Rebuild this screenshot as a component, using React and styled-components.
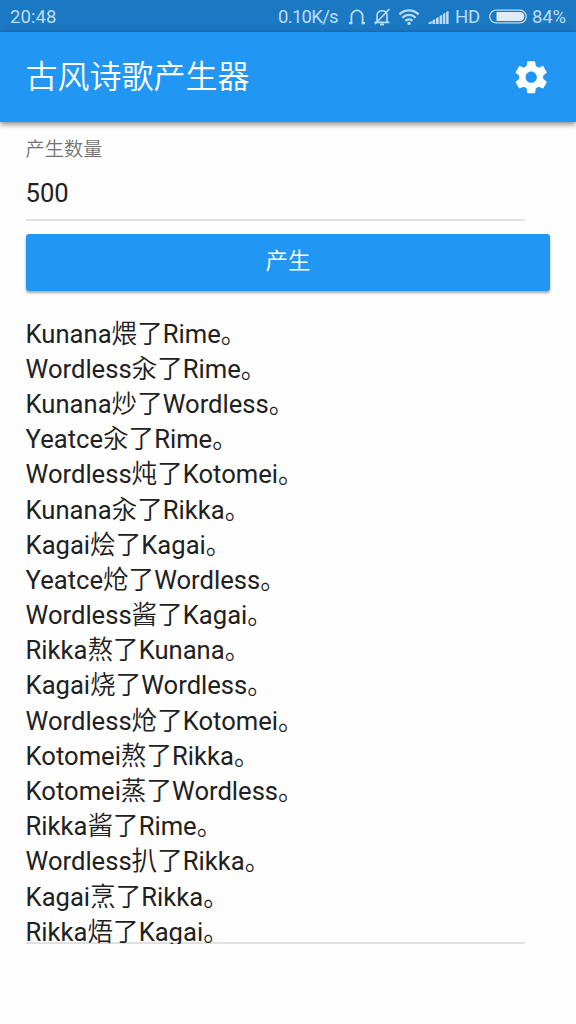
import React from 'react'
import styled, { createGlobalStyle } from 'styled-components'

const poems = [
    'Kunana煨了Rime。',
    'Wordless汆了Rime。',
    'Kunana炒了Wordless。',
    'Yeatce汆了Rime。',
    'Wordless炖了Kotomei。',
    'Kunana汆了Rikka。',
    'Kagai烩了Kagai。',
    'Yeatce炝了Wordless。',
    'Wordless酱了Kagai。',
    'Rikka熬了Kunana。',
    'Kagai烧了Wordless。',
    'Wordless炝了Kotomei。',
    'Kotomei熬了Rikka。',
    'Kotomei蒸了Wordless。',
    'Rikka酱了Rime。',
    'Wordless扒了Rikka。',
    'Kagai烹了Rikka。',
    'Rikka焐了Kagai。',
]

function HeadphoneIcon() {
    return (
        <svg width="18" height="18" viewBox="0 0 18 18" fill="none" stroke="currentColor" strokeWidth="1.8">
            <path d="M3.4 15.4V8a5.6 5.6 0 0 1 11.2 0v7.4" />
            <path d="M1 15.2h3.3M13.7 15.2H17" strokeWidth="2.2" />
        </svg>
    )
}

function MutedBellIcon() {
    return (
        <svg width="18" height="18" viewBox="0 0 18 18" fill="none" stroke="currentColor" strokeWidth="1.6">
            <path d="M1.6 14.4h14.8M4 14V7.4C4 4.6 6 2.8 9 2.8s5 1.8 5 4.6V14" />
            <path d="M16.4 1 2 16" />
            <path d="M7 16.4h4" strokeWidth="2" />
        </svg>
    )
}

function WifiIcon() {
    return (
        <svg width="22" height="18" viewBox="0 0 22 18" fill="none" stroke="currentColor" strokeWidth="2.3">
            <path d="M1.4 6.4a13.6 13.6 0 0 1 19.2 0" />
            <path d="M4.4 9.7a9.3 9.3 0 0 1 13.2 0" />
            <path d="M7.5 12.9a5 5 0 0 1 7 0" />
            <circle cx="11" cy="15.4" r="1.6" fill="currentColor" stroke="none" />
        </svg>
    )
}

function SignalIcon() {
    return (
        <svg width="21" height="16" viewBox="0 0 21 16" fill="currentColor">
            <path d="M.5 15v-1.2L3.6 12v3zM4.4 15v-3.6l2.8-1.5V15zM8 15V9.3l2.7-1.4V15zM11.6 15V7.1l2.5-1.3V15zM14.9 15V5l2.4-1.2V15zM18.1 15V3.1L20.6 2v13z" />
        </svg>
    )
}

function BatteryIcon() {
    return (
        <svg width="38" height="15" viewBox="0 0 38 15" fill="none">
            <rect x="0.8" y="1.1" width="36.4" height="12.8" rx="6.2" stroke="currentColor" strokeWidth="1.3" />
            <path d="M7.5 2.9h23.2a4.6 4.6 0 0 1 0 9.2H7.5z" fill="#e0edf8" />
        </svg>
    )
}

function SettingsIcon() {
    return (
        <svg width="38.4" height="38.4" viewBox="0 0 24 24" fill="currentColor">
            <path d="M19.43 12.98c.04-.32.07-.64.07-.98s-.03-.66-.07-.98l2.11-1.65c.19-.15.24-.42.12-.64l-2-3.46c-.12-.22-.39-.3-.61-.22l-2.49 1c-.52-.4-1.08-.73-1.69-.98l-.38-2.65C14.46 2.18 14.25 2 14 2h-4c-.25 0-.46.18-.49.42l-.38 2.65c-.61.25-1.17.59-1.69.98l-2.49-1c-.23-.09-.49 0-.61.22l-2 3.46c-.13.22-.07.49.12.64l2.11 1.65c-.04.32-.07.65-.07.98s.03.66.07.98l-2.11 1.65c-.19.15-.24.42-.12.64l2 3.46c.12.22.39.3.61.22l2.49-1c.52.4 1.08.73 1.69.98l.38 2.65c.03.24.24.42.49.42h4c.25 0 .46-.18.49-.42l.38-2.65c.61-.25 1.17-.59 1.69-.98l2.49 1c.23.09.49 0 .61-.22l2-3.46c.12-.22.07-.49-.12-.64l-2.11-1.65zM12 15.5c-1.93 0-3.5-1.57-3.5-3.5s1.57-3.5 3.5-3.5 3.5 1.57 3.5 3.5-1.57 3.5-3.5 3.5z" />
        </svg>
    )
}

function App() {
    return (
        <Screen>
            <GlobalStyle />
            <StatusBar>
                <Clock>20:48</Clock>
                <StatusIcons>
                    <StatusText width="61px" spacing="-0.7px">0.10K/s</StatusText>
                    <IconSlot left="9px"><HeadphoneIcon /></IconSlot>
                    <IconSlot left="7px"><MutedBellIcon /></IconSlot>
                    <IconSlot left="7px"><WifiIcon /></IconSlot>
                    <IconSlot left="8px"><SignalIcon /></IconSlot>
                    <StatusText left="6px" width="26px">HD</StatusText>
                    <IconSlot left="8px"><BatteryIcon /></IconSlot>
                    <StatusText left="5px" width="34px">84%</StatusText>
                </StatusIcons>
            </StatusBar>
            <Toolbar>
                <Title>古风诗歌产生器</Title>
                <SettingsButton aria-label="设置"><SettingsIcon /></SettingsButton>
            </Toolbar>
            <Content>
                <Label>产生数量</Label>
                <AmountField>500</AmountField>
                <GenerateButton>产生</GenerateButton>
                <Output>
                    {poems.map((poem, i) => <Line key={i}>{poem}</Line>)}
                </Output>
            </Content>
        </Screen>
    )
}

export default App


const GlobalStyle = createGlobalStyle`
    body {
        margin: 0;
        background: #fefefe;
    }
`

const Screen = styled.div`
    display: flex;
    flex-direction: column;
    width: 576px;
    height: 1024px;
    overflow: hidden;
    color: #212121;
    background: #fefefe;
    font-family: Roboto, 'Noto Sans CJK SC DemiLight', 'Noto Sans CJK SC', sans-serif;
`

const StatusBar = styled.div`
    display: flex;
    justify-content: space-between;
    align-items: center;
    box-sizing: border-box;
    height: 32px;
    padding: 1px 10px 0 10px;
    color: #bcdcf6;
    background: #1b78c2;
    font-size: 18.5px;
    line-height: 30px;
`

const Clock = styled.span`
    letter-spacing: 0.1px;
`

const StatusIcons = styled.div`
    display: flex;
    align-items: center;
`

const StatusText = styled.span`
    width: ${props => props.width};
    margin-left: ${props => props.left || 0};
    white-space: nowrap;
    letter-spacing: ${props => props.spacing || '-0.2px'};
`

const IconSlot = styled.span`
    display: flex;
    margin-left: ${props => props.left};
`

const Toolbar = styled.header`
    display: flex;
    flex-shrink: 0;
    justify-content: space-between;
    align-items: center;
    height: 90px;
    padding: 0 25.6px;
    color: #fff;
    background: #2196f3;
    box-shadow: 0 2px 6px rgba(0, 0, 0, 0.5);
`

const Title = styled.h1`
    margin: 0;
    font-size: 32px;
    font-weight: 400;
    line-height: 48px;
`

const SettingsButton = styled.button`
    display: flex;
    padding: 0;
    color: inherit;
    background: none;
    border: none;
`

const Content = styled.main`
    display: flex;
    flex-direction: column;
    padding: 14px 25.6px 0;
`

const Label = styled.label`
    color: #737373;
    font-size: 19.2px;
    line-height: 28px;
`

const AmountField = styled.div`
    box-sizing: border-box;
    width: 499px;
    height: 57px;
    padding-top: 11px;
    border-bottom: 2px solid #e3e3e3;
    font-size: 25.6px;
    line-height: 36px;
`

const GenerateButton = styled.button`
    height: 57px;
    margin-top: 13px;
    padding: 0 0 8px;
    color: #fff;
    background: #2196f3;
    border: none;
    border-radius: 3px;
    box-shadow: 0 2px 3px rgba(0, 0, 0, 0.35);
    font-family: inherit;
    font-size: 22.4px;
`

const Output = styled.div`
    box-sizing: border-box;
    width: 499px;
    height: 627.4px;
    margin-top: 25.6px;
    overflow: hidden;
    box-shadow: inset 0 -2px #e0e0e0;
    font-size: 25.6px;
    line-height: 35.2px;
`

const Line = styled.div`
    height: 35.2px;
    white-space: nowrap;
`
